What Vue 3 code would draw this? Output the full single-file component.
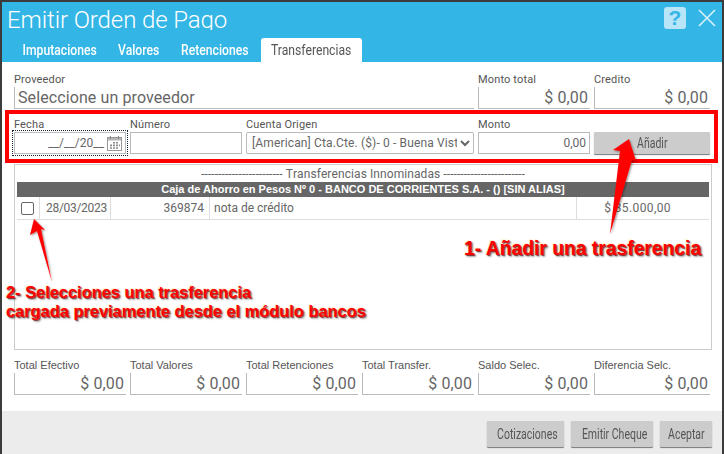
<script setup>
const totals = [
  { label: 'Total Efectivo' },
  { label: 'Total Valores' },
  { label: 'Total Retenciones' },
  { label: 'Total Transfer.' },
  { label: 'Saldo Selec.' },
  { label: 'Diferencia Selc.' }
]
const tabs = ['Imputaciones', 'Valores', 'Retenciones', 'Transferencias']
</script>

<template>
  <div class="dialog">
    <header class="head">
      <div class="title-row">
        <h1 class="title">Emitir Orden de Pago</h1>
        <div class="help">?</div>
        <svg class="close" width="18" height="18" viewBox="0 0 18 18">
          <path d="M1 1L17 17M17 1L1 17" stroke="#d8f1fb" stroke-width="1.6" fill="none" />
        </svg>
      </div>
      <nav class="tabs">
        <div v-for="(t, i) in tabs" :key="t" class="tab" :class="{ active: i === 3 }">
          <span class="squeeze">{{ t }}</span>
        </div>
      </nav>
    </header>

    <main class="body">
      <section class="grid">
        <div class="field span4">
          <label>Proveedor</label>
          <div class="readout left">Seleccione un proveedor</div>
        </div>
        <div class="field">
          <label>Monto total</label>
          <div class="readout">$ 0,00</div>
        </div>
        <div class="field">
          <label>Credito</label>
          <div class="readout">$ 0,00</div>
        </div>
      </section>

      <section class="grid second">
        <div class="field">
          <label>Fecha</label>
          <div class="box date">
            <span>__/__/20__</span>
            <svg width="15" height="15" viewBox="0 0 15 15">
              <rect x="0.5" y="1.5" width="14" height="13" fill="#fff" stroke="#9a9a9a" />
              <rect x="1" y="2" width="13" height="2.5" fill="#b5b5b5" />
              <path d="M3.5 0v3M11.5 0v3" stroke="#888" />
              <path d="M6 6h2v1.6H6zM9 6h2v1.6H9zM3 8.6h2v1.6H3zM6 8.6h2v1.6H6zM9 8.6h2v1.6H9zM12 8.6h1v1.6h-1zM3 11.2h2v1.6H3zM6 11.2h2v1.6H6zM9 11.2h2v1.6H9z" fill="#8a8a8a" />
            </svg>
          </div>
        </div>
        <div class="field">
          <label>Número</label>
          <div class="box"></div>
        </div>
        <div class="field span2">
          <label>Cuenta Origen</label>
          <select class="select">
            <option>[American] Cta.Cte. ($)- 0 - Buena Vista</option>
          </select>
        </div>
        <div class="field">
          <label>Monto</label>
          <div class="box amount">0,00</div>
        </div>
        <div class="field add-cell">
          <button class="btn wide"><span class="squeeze">Añadir</span></button>
        </div>
      </section>

      <section class="panel">
        <div class="panel-title">------------------------ Transferencias Innominadas ------------------------</div>
        <div class="bank">Caja de Ahorro en Pesos Nº 0 - BANCO DE CORRIENTES S.A. - () [SIN ALIAS]</div>
        <div class="row">
          <div class="cell c-check"><input type="checkbox" class="check" /></div>
          <div class="cell c-date">28/03/2023</div>
          <div class="cell c-num">369874</div>
          <div class="cell c-text">nota de crédito</div>
          <div class="cell c-money">$ 35.000,00</div>
        </div>
      </section>

      <section class="grid totals">
        <div v-for="t in totals" :key="t.label" class="field">
          <label class="sans">{{ t.label }}</label>
          <div class="readout">$ 0,00</div>
        </div>
      </section>
    </main>

    <footer class="foot">
      <button class="btn b1"><span class="squeeze">Cotizaciones</span></button>
      <button class="btn b2"><span class="squeeze">Emitir Cheque</span></button>
      <button class="btn b3"><span class="squeeze">Aceptar</span></button>
    </footer>

    <div class="red-box"></div>
    <svg class="arrows" width="724" height="454" viewBox="0 0 724 454">
      <defs>
        <filter id="sh" x="-30%" y="-30%" width="160%" height="160%">
          <feDropShadow dx="1" dy="1" stdDeviation="1" flood-color="#000" flood-opacity="0.45" />
        </filter>
      </defs>
      <path d="M629 139L613 150L620 151L610 234L632 160L636 161Z" fill="#f00" filter="url(#sh)" />
      <path d="M34 219L30 235L37 231L52 282L41 229L45 230Z" fill="#f00" filter="url(#sh)" />
    </svg>
    <div class="note note1">1- Añadir una trasferencia</div>
    <div class="note note2">2- Selecciones una trasferencia<br />cargada previamente desde el módulo bancos</div>
  </div>
</template>

<style scoped>
.dialog {
  position: absolute;
  left: 2px;
  top: 2px;
  width: 720px;
  height: 452px;
  background: #fff;
  overflow: hidden;
  font-family: Roboto, "Liberation Sans", sans-serif;
  color: #666;
  display: flex;
  flex-direction: column;
}
.head {
  background: #33b5e5;
  height: 60px;
  display: flex;
  flex-direction: column;
  flex: none;
}
.title-row {
  display: flex;
  height: 36px;
  padding-left: 5px;
  align-items: flex-start;
}
.title {
  margin: 0;
  flex: 1;
  height: 26px;
  margin-top: 2px;
  overflow: hidden;
  font-size: 24px;
  line-height: 32px;
  font-weight: 300;
  letter-spacing: -0.1px;
  color: #fff;
}
.help {
  width: 22px;
  height: 22px;
  margin-top: 5px;
  border-radius: 3px;
  background: #b8e5f8;
  color: #33b5e5;
  font: 700 21px/22px "Liberation Sans", sans-serif;
  text-align: center;
}
.close {
  margin: 7px 6px 0 12px;
}
.tabs {
  display: flex;
  height: 24px;
  padding-left: 10px;
}
.tab {
  width: 101px;
  height: 24px;
  margin-right: 2px;
  color: #fff;
  font-size: 14px;
  font-weight: 500;
  line-height: 24px;
  text-align: center;
  border-radius: 3px 3px 0 0;
}
.tab:nth-child(1) { width: 95px; margin-right: 2px; }
.tab:nth-child(2) { width: 60px; margin-right: 2px; }
.tab:nth-child(3) { width: 88px; margin-right: 2px; }
.tab.active {
  background: #fff;
  color: #555;
  font-weight: 400;
}
.squeeze {
  display: inline-block;
  transform: scaleX(0.87);
  white-space: nowrap;
}
.body {
  flex: 1;
  padding: 11px 10px 0 12px;
}
.grid {
  display: grid;
  grid-template-columns: repeat(5, 112px) 116px;
  column-gap: 4px;
}
.second {
  margin-top: 9px;
}
.span4 {
  grid-column: span 4;
}
.span2 {
  grid-column: span 2;
}
.field {
  display: flex;
  flex-direction: column;
  min-width: 0;
}
.field label {
  height: 14px;
  font-size: 11px;
  letter-spacing: 0.15px;
  line-height: 13px;
  color: #555;
  white-space: nowrap;
}
.field label.sans {
  font-family: "Liberation Sans", sans-serif;
  font-size: 11px;
  letter-spacing: 0;
}
.readout {
  height: 22px;
  border-left: 1px solid #bbb;
  border-bottom: 1px solid #bbb;
  font-size: 16px;
  letter-spacing: 0.1px;
  line-height: 22px;
  text-align: right;
  padding: 0 2px 0 3px;
  color: #666;
  box-sizing: border-box;
}
.readout.left {
  text-align: left;
}
.box {
  height: 22px;
  box-sizing: border-box;
  border: 1px solid #bbb;
  font-size: 12px;
  line-height: 20px;
  color: #666;
  padding: 0 3px;
}
.date {
  display: flex;
  justify-content: flex-end;
  align-items: center;
  gap: 3px;
  outline: 1px dotted #123;
  outline-offset: 1px;
}
.amount {
  text-align: right;
}
.select {
  height: 22px;
  width: 228px;
  box-sizing: border-box;
  border: 1px solid #bbb;
  border-radius: 2px;
  background: #fff;
  color: #666;
  font-family: Roboto, sans-serif;
  font-size: 12px;
  letter-spacing: 0.14px;
  padding: 0 0 0 1px;
}
.add-cell {
  justify-content: flex-end;
}
.btn {
  border: none;
  background: #ccc;
  color: #555;
  font-family: Roboto, sans-serif;
  font-size: 14px;
  padding: 0;
  height: 26px;
  border-radius: 1px;
  box-shadow: 0 1px 1px #777;
}
.btn .squeeze {
  transform: scaleX(0.75);
}
.btn.wide {
  height: 22px;
  width: 116px;
}
.panel {
  margin-top: 10px;
  height: 186px;
  box-sizing: border-box;
  border: 1px solid #ccc;
  padding: 3px 2px 0;
}
.panel-title {
  height: 14px;
  font-size: 12px;
  letter-spacing: 0.08px;
  line-height: 13px;
  text-align: center;
  color: #666;
  white-space: nowrap;
  font-kerning: none;
  font-variant-ligatures: none;
}
.bank {
  height: 15px;
  background: #666;
  color: #fff;
  font: 700 11px/15px "Liberation Sans", sans-serif;
  text-align: center;
}
.row {
  display: flex;
  height: 23px;
  box-sizing: border-box;
  border-bottom: 1px solid #ddd;
  font-size: 12px;
  line-height: 22px;
  color: #666;
}
.cell {
  box-sizing: border-box;
  border-right: 1px solid #ddd;
  white-space: nowrap;
}
.c-check { width: 23px; display: flex; align-items: center; padding-left: 4px; }
.c-date { width: 71px; padding-left: 6px; letter-spacing: -0.3px; }
.c-num { width: 99px; text-align: right; padding-right: 5px; }
.c-text { width: 367px; padding-left: 4px; }
.c-money { flex: 1; border-right: none; text-align: right; padding-right: 38px; letter-spacing: 0.4px; }
.check {
  appearance: none;
  margin: 0;
  width: 13px;
  height: 13px;
  border: 1px solid #666;
  border-radius: 2px;
  background: #fff;
}
.totals {
  margin-top: 9px;
}
.foot {
  position: absolute;
  left: 0;
  right: 0;
  top: 409px;
  height: 43px;
  background: #ececec;
  display: flex;
  justify-content: flex-end;
  gap: 7px;
  padding: 10px 10px 0 0;
  box-sizing: border-box;
}
.b1 { width: 77px; }
.b2 { width: 82px; }
.b3 { width: 52px; }
.red-box {
  position: absolute;
  left: 3px;
  top: 108px;
  width: 713px;
  height: 53px;
  box-sizing: border-box;
  border: 4px solid #f00;
  pointer-events: none;
}
.arrows {
  position: absolute;
  left: -2px;
  top: -2px;
  pointer-events: none;
}
.note {
  position: absolute;
  font-family: "Liberation Sans", sans-serif;
  font-weight: 700;
  color: #f00;
  white-space: nowrap;
  text-shadow: 1px 1px 1px rgba(90, 0, 0, 0.75), -1px -1px 1px rgba(255, 235, 200, 0.8), 2px 2px 2px rgba(0, 0, 0, 0.3);
}
.note1 {
  left: 462px;
  top: 236px;
  font-size: 19.3px;
  line-height: 22px;
}
.note2 {
  left: 4px;
  top: 281px;
  font-size: 16.4px;
  line-height: 19px;
}
</style>

<style>
html, body {
  margin: 0;
  background: #3b3b3b;
  overflow: hidden;
}
</style>
